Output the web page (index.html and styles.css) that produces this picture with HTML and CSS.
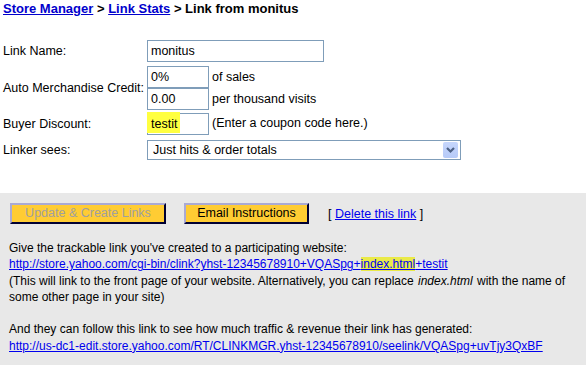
FILE: index.html
```html
<!DOCTYPE html>
<html>
<head>
<meta charset="utf-8">
<link rel="stylesheet" href="styles.css">
</head>
<body>
<div class="title"><a href="#">Store Manager</a> &gt; <a href="#">Link Stats</a> &gt; Link from monitus</div>
<div class="form">
  <div class="row r1">
    <div class="label">Link Name:</div>
    <div class="ctl"><span class="field wide">monitus</span></div>
  </div>
  <div class="row r2">
    <div class="label">Auto Merchandise Credit:</div>
    <div class="ctl stack">
      <div class="line"><span class="field short">0%</span><span class="note">of sales</span></div>
      <div class="line"><span class="field short">0.00</span><span class="note">per thousand visits</span></div>
    </div>
  </div>
  <div class="row r3">
    <div class="label">Buyer Discount:</div>
    <div class="ctl"><span class="field short hlfield"><span class="hl">testit</span></span><span class="note">(Enter a coupon code here.)</span></div>
  </div>
  <div class="row r4">
    <div class="label">Linker sees:</div>
    <div class="ctl">
      <div class="select"><span class="seltext">Just hits &amp; order totals</span><span class="arrow"><svg width="15" height="16" viewBox="0 0 15 16"><path d="M4 6 L7.5 9.5 L11 6" fill="none" stroke="#4d6185" stroke-width="2.2"/></svg></span></div>
    </div>
  </div>
</div>
<div class="panel">
  <div class="buttons">
    <span class="btn disabled">Update &amp; Create Links</span>
    <span class="btn email">Email Instructions</span>
    <span class="del">[ <a href="#">Delete this link</a> ]</span>
  </div>
  <div class="info">
    <div>Give the trackable link you've created to a participating website:</div>
    <div class="url"><a href="#">http://store.yahoo.com/cgi-bin/clink?yhst-12345678910+VQASpg+<span class="hl2">index.html</span>+testit</a></div>
    <div>(This will link to the front page of your website. Alternatively, you can replace <i class="it">index.html</i> <span>with the name of</span><br><span>some other page in your site)</span></div>
    <div class="blank">&nbsp;</div>
    <div>And they can follow this link to see how much traffic &amp; revenue their link has generated:</div>
    <div class="url"><a href="#">http://us-dc1-edit.store.yahoo.com/RT/CLINKMGR.yhst-12345678910/seelink/VQASpg+uvTjy3QxBF</a></div>
  </div>
</div>
</body>
</html>
```
FILE: styles.css
```css
html, body {
  margin: 0;
  padding: 0;
  background: #ffffff;
  font-family: "Liberation Sans", Arial, sans-serif;
  font-size: 12px;
  color: #000;
}
a { color: #0000ee; }
.title {
  font-weight: bold;
  font-size: 13px;
  line-height: 16px;
  padding: 1px 3px 0 3px;
}
.title a { color: #0000cc; }
.form {
  padding: 23px 0 0 3px;
  height: 153px;
}
.row {
  display: flex;
  align-items: center;
}
.label {
  width: 144px;
  font-size: 12.5px;
}
.r2 { margin-top: 4px; }
.r3 { margin-top: 3px; }
.r4 { margin-top: 5px; }
.stack { display: flex; flex-direction: column; }
.line { display: flex; align-items: center; }
.field {
  display: inline-block;
  box-sizing: border-box;
  height: 22px;
  line-height: 20px;
  border: 1px solid #7f9db9;
  padding: 0 3px;
  background: #fff;
  vertical-align: middle;
  font-size: 12.5px;
}
.wide { width: 177px; }
.short { width: 62px; }
.note { margin-left: 3px; font-size: 12.5px; }
.hlfield { padding: 0; }
.hl {
  display: inline-block;
  background: #ffff40;
  margin: -2px 0 0 -1px;
  padding: 1px 3px 0 4px;
  height: 20px;
  line-height: 22px;
}
.select {
  box-sizing: border-box;
  width: 314px;
  height: 20px;
  border: 1px solid #7f9db9;
  display: flex;
  align-items: center;
  justify-content: space-between;
  font-size: 12.5px;
}
.seltext { padding-left: 5px; }
.arrow {
  width: 15px;
  height: 16px;
  margin-right: 2px;
  border-radius: 2px;
  background: linear-gradient(#c6d6fc, #b6caf8);
  display: flex;
}
.panel {
  background: #e8e8e8;
  padding: 10px 0 13px 10px;
}
.buttons {
  display: flex;
  align-items: center;
  height: 21px;
}
.btn {
  box-sizing: border-box;
  height: 21px;
  line-height: 17px;
  background: #ffcc33;
  border-style: solid;
  border-width: 2px;
  border-color: #aaaad4 #000033 #000033 #aaaad4;
  text-align: center;
  font-size: 12.5px;
}
.disabled { width: 156px; color: #a0a0a0; }
.email { width: 125px; margin-left: 18px; color: #000; }
.del { margin-left: 19px; font-size: 12.5px; }
.info {
  margin-top: 16px;
  line-height: 16.3px;
  padding-right: 3px;
  margin-left: -1px;
}
.it { padding: 0 1px; }
.url { white-space: nowrap; }
.hl2 { background: #eaea48; }
```
